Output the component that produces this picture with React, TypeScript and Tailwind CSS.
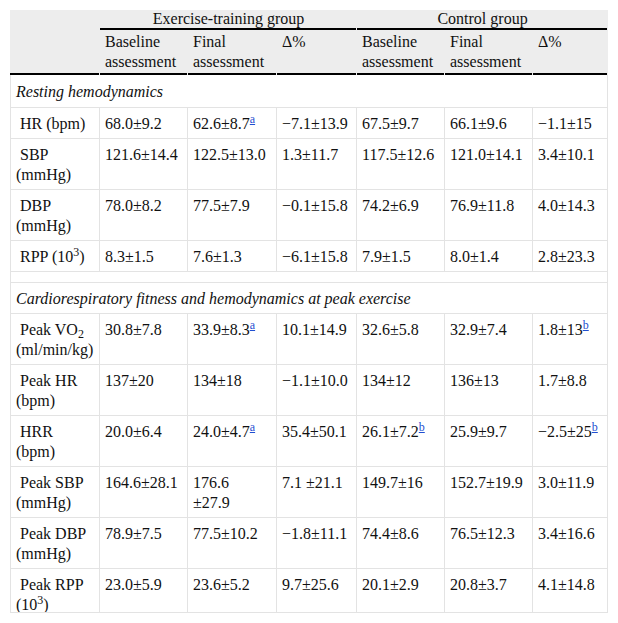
import type { ReactNode } from "react"

const line =
  "relative after:absolute after:left-0 after:right-[1px] after:bottom-0 after:h-[2px] after:bg-black"

function Note({ id }: { id: string }) {
  return (
    <sup>
      <a href={`#note-${id}`} className="text-[#1f4fd1] underline">
        {id}
      </a>
    </sup>
  )
}

type Row = { label: ReactNode; cells: ReactNode[] }

const resting: Row[] = [
  {
    label: "\u00a0HR (bpm)",
    cells: ["68.0±9.2", <>62.6±8.7<Note id="a" /></>, "−7.1±13.9", "67.5±9.7", "66.1±9.6", "−1.1±15"],
  },
  {
    label: "\u00a0SBP (mmHg)",
    cells: ["121.6±14.4", "122.5±13.0", "1.3±11.7", "117.5±12.6", "121.0±14.1", "3.4±10.1"],
  },
  {
    label: "\u00a0DBP (mmHg)",
    cells: ["78.0±8.2", "77.5±7.9", "−0.1±15.8", "74.2±6.9", "76.9±11.8", "4.0±14.3"],
  },
  {
    label: <>{"\u00a0RPP (10"}<sup>3</sup>)</>,
    cells: ["8.3±1.5", "7.6±1.3", "−6.1±15.8", "7.9±1.5", "8.0±1.4", "2.8±23.3"],
  },
]

const peak: Row[] = [
  {
    label: <>{"\u00a0Peak VO"}<sub>2</sub> (ml/min/kg)</>,
    cells: ["30.8±7.8", <>33.9±8.3<Note id="a" /></>, "10.1±14.9", "32.6±5.8", "32.9±7.4", <>1.8±13<Note id="b" /></>],
  },
  {
    label: "\u00a0Peak HR (bpm)",
    cells: ["137±20", "134±18", "−1.1±10.0", "134±12", "136±13", "1.7±8.8"],
  },
  {
    label: <>{"\u00a0HRR"}<br />(bpm)</>,
    cells: [
      "20.0±6.4",
      <>24.0±4.7<Note id="a" /></>,
      "35.4±50.1",
      <>26.1±7.2<Note id="b" /></>,
      "25.9±9.7",
      <>−2.5±25<Note id="b" /></>,
    ],
  },
  {
    label: "\u00a0Peak SBP (mmHg)",
    cells: ["164.6±28.1", <>176.6<br />±27.9</>, "7.1 ±21.1", "149.7±16", "152.7±19.9", "3.0±11.9"],
  },
  {
    label: "\u00a0Peak DBP (mmHg)",
    cells: ["78.9±7.5", "77.5±10.2", "−1.8±11.1", "74.4±8.6", "76.5±12.3", "3.4±16.6"],
  },
  {
    label: <>{"\u00a0Peak RPP (10"}<sup>3</sup>)</>,
    cells: ["23.0±5.9", "23.6±5.2", "9.7±25.6", "20.1±2.9", "20.8±3.7", "4.1±14.8"],
  },
]

const cell = "border-b border-r border-[#e3e3e3] pl-[5px] pr-[3px] pt-[6px] pb-[4px] align-top leading-[20px]"

function DataRow({ row }: { row: Row }) {
  return (
    <tr>
      <td className={`${cell} border-l`}>{row.label}</td>
      {row.cells.map((c, i) => (
        <td key={i} className={cell}>
          {c}
        </td>
      ))}
    </tr>
  )
}

export default function App() {
  const sub = ["Baseline assessment", "Final assessment", "Δ%"]

  return (
    <div className="min-h-screen bg-white p-[10px] [font-family:'Liberation_Serif','Times_New_Roman',serif] text-[16px] text-[#111]">
      <div className="w-[598px] h-[603px] overflow-hidden border-b border-[#e3e3e3]">
        <table className="w-[598px] table-fixed border-separate border-spacing-0">
          <colgroup>
            <col className="w-[90px]" />
            <col className="w-[88px]" />
            <col className="w-[89px]" />
            <col className="w-[80px]" />
            <col className="w-[88px]" />
            <col className="w-[88px]" />
            <col className="w-[75px]" />
          </colgroup>
          <thead className="bg-[#ededed]">
            <tr>
              <th rowSpan={2} className={line} />
              <th colSpan={3} className={`${line} font-normal leading-[18px] pb-[2px] text-center`}>
                Exercise-training group
              </th>
              <th colSpan={3} className={`${line} font-normal leading-[18px] pb-[2px] text-center`}>
                Control group
              </th>
            </tr>
            <tr>
              {[...sub, ...sub].map((s, i) => (
                <th
                  key={i}
                  className={`${line} font-normal text-left align-top leading-[20px] pl-[5px] pr-[3px] pt-[2px] pb-[3px]`}
                >
                  {s}
                </th>
              ))}
            </tr>
          </thead>
          <tbody>
            <tr>
              <td colSpan={7} className="border-x border-b border-[#e3e3e3] pl-[5px] pt-[7px] pb-[5px] leading-[20px] italic">
                Resting hemodynamics
              </td>
            </tr>
            {resting.map((r, i) => (
              <DataRow key={i} row={r} />
            ))}
            <tr>
              <td colSpan={7} className="h-[11px] border-x border-b border-[#e3e3e3]" />
            </tr>
            <tr>
              <td colSpan={7} className="border-x border-b border-[#e3e3e3] pl-[5px] pt-[6px] pb-[4px] leading-[20px] italic">
                Cardiorespiratory fitness and hemodynamics at peak exercise
              </td>
            </tr>
            {peak.map((r, i) => (
              <DataRow key={i} row={r} />
            ))}
          </tbody>
        </table>
      </div>
    </div>
  )
}
